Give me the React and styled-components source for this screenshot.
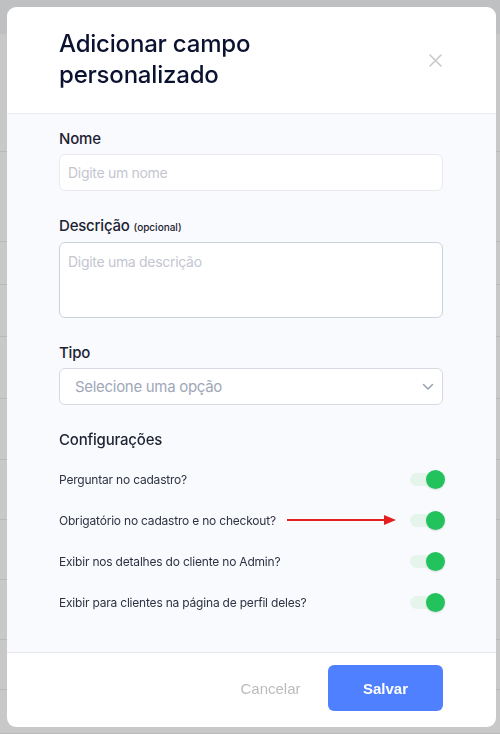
import styled, { createGlobalStyle } from 'styled-components'

const GlobalStyle = createGlobalStyle`
    * { box-sizing: border-box; }
    html, body { margin: 0; height: 100%; }
    body {
        font-family: Inter, "Noto Sans", sans-serif;
        background: #c8c8c9;
        overflow: hidden;
    }
`

const bgRows = [118, 90, 43, 52, 62, 61, 60, 60, 60, 50, 44]

const settings = [
    'Perguntar no cadastro?',
    'Obrigatório no cadastro e no checkout?',
    'Exibir nos detalhes do cliente no Admin?',
    'Exibir para clientes na página de perfil deles?',
]

export default function App() {
    return (
        <>
            <GlobalStyle />
            <Page>
                <PageTop />
                {bgRows.map((h, i) => <PageRow key={i} style={{ height: h }} />)}
            </Page>

            <Modal>
                <Header>
                    <Title>Adicionar campo<br />personalizado</Title>
                    <Close aria-label="Fechar">
                        <svg width="13" height="13" viewBox="0 0 13 13">
                            <path d="M1 1L12 12M12 1L1 12" stroke="#c9c9c9" strokeWidth="1.6" strokeLinecap="round" />
                        </svg>
                    </Close>
                </Header>

                <Body>
                    <Field>
                        <Label>Nome</Label>
                        <Input placeholder="Digite um nome" />
                    </Field>

                    <Field>
                        <Label>Descrição <Small>(opcional)</Small></Label>
                        <TextArea placeholder="Digite uma descrição" />
                    </Field>

                    <Field>
                        <Label>Tipo</Label>
                        <Select>
                            <span>Selecione uma opção</span>
                            <svg width="12" height="8" viewBox="0 0 12 8">
                                <path d="M1.5 1.5L6 6L10.5 1.5" fill="none" stroke="#9aa1b3" strokeWidth="1.5" strokeLinecap="round" strokeLinejoin="round" />
                            </svg>
                        </Select>
                    </Field>

                    <Field $last>
                        <Label>Configurações</Label>
                        <Settings>
                            {settings.map((s, i) => (
                                <SettingRow key={s}>
                                    <SettingText>{s}</SettingText>
                                    {i === 1 && (
                                        <Arrow width="110" height="12" viewBox="0 0 110 12">
                                            <path d="M0 6H98" stroke="#e3201f" strokeWidth="2" />
                                            <path d="M97 1L109 6L97 11Z" fill="#e3201f" />
                                        </Arrow>
                                    )}
                                    <Toggle>
                                        <Knob />
                                    </Toggle>
                                </SettingRow>
                            ))}
                        </Settings>
                    </Field>
                </Body>

                <Footer>
                    <CancelBtn>Cancelar</CancelBtn>
                    <SaveBtn>Salvar</SaveBtn>
                </Footer>
            </Modal>
        </>
    )
}

const Page = styled.div`
    display: flex;
    flex-direction: column;
    height: 734px;
`

const PageTop = styled.div`
    height: 34px;
    background: #bfc0c2;
`

const PageRow = styled.div`
    border-bottom: 1px solid #b9b9ba;
    flex-shrink: 0;
`

const Modal = styled.div`
    position: fixed;
    top: 7px;
    left: 7px;
    width: 489px;
    height: 720px;
    background: #fff;
    border-radius: 9px;
    display: flex;
    flex-direction: column;
    overflow: hidden;
`

const Header = styled.div`
    height: 107px;
    flex-shrink: 0;
    padding: 0 53px 0 52px;
    display: flex;
    align-items: center;
    justify-content: space-between;
    border-bottom: 1px solid #e9ebf0;
`

const Title = styled.h2`
    margin: 0;
    padding-bottom: 2px;
    font-size: 24px;
    line-height: 31px;
    font-weight: 500;
    color: #0b1230;
    letter-spacing: -0.2px;
`

const Close = styled.button`
    border: 0;
    background: none;
    padding: 0;
    margin-right: 1px;
    display: flex;
    cursor: pointer;
`

const Body = styled.div`
    flex: 1;
    background: #f9fafd;
    padding: 16px 53px 0 52px;
    display: flex;
    flex-direction: column;
`

const Field = styled.div`
    display: flex;
    flex-direction: column;
    margin-bottom: ${p => (p.$last ? 0 : 26)}px;
`

const Label = styled.label`
    font-size: 15px;
    line-height: 18px;
    font-weight: 500;
    color: #1d2233;
    margin-bottom: 6px;
    letter-spacing: -0.2px;
`

const Small = styled.span`
    font-size: 10px;
    font-weight: 500;
    letter-spacing: 0;
`

const Input = styled.input`
    height: 37px;
    border: 1px solid #e8eaef;
    border-radius: 6px;
    background: #fff;
    padding: 0 8px;
    font: 14px Inter, sans-serif;
    letter-spacing: -0.3px;
    outline: none;
    &::placeholder { color: #c3c6d0; }
`

const TextArea = styled.textarea`
    height: 76px;
    border: 1px solid #cdd1da;
    border-radius: 6px;
    background: #fff;
    padding: 10px 8px;
    font: 14px Inter, sans-serif;
    letter-spacing: -0.3px;
    resize: none;
    outline: none;
    &::placeholder { color: #c3c6d0; }
`

const Select = styled.div`
    height: 37px;
    border: 1px solid #d6d9e1;
    border-radius: 6px;
    background: #fff;
    padding: 0 8px 0 15px;
    display: flex;
    align-items: center;
    justify-content: space-between;
    font-size: 15px;
    letter-spacing: -0.3px;
    color: #a0a7b9;
`

const Settings = styled.div`
    display: flex;
    flex-direction: column;
    padding-top: 4px;
`

const SettingRow = styled.div`
    position: relative;
    height: 41px;
    display: flex;
    align-items: center;
    justify-content: space-between;
`

const SettingText = styled.span`
    font-size: 12px;
    color: #2d3243;
    letter-spacing: -0.2px;
`

const Arrow = styled.svg`
    position: absolute;
    left: 228px;
    top: 14px;
`

const Toggle = styled.div`
    width: 34px;
    height: 13px;
    border-radius: 7px;
    background: #e5f5eb;
    position: relative;
    margin-right: -1px;
`

const Knob = styled.div`
    position: absolute;
    right: -1px;
    top: -3px;
    width: 19px;
    height: 19px;
    border-radius: 50%;
    background: #22c35d;
    box-shadow: 0 1px 2px rgba(0, 0, 0, 0.12);
`

const Footer = styled.div`
    height: 75px;
    flex-shrink: 0;
    border-top: 1px solid #e6e8ee;
    display: flex;
    align-items: center;
    justify-content: flex-end;
    padding: 0 53px 4px 0;
`

const CancelBtn = styled.button`
    width: 115px;
    height: 46px;
    border: 0;
    background: none;
    font: 15px "Liberation Sans", Arial, sans-serif;
    color: #bcbcbc;
    cursor: pointer;
`

const SaveBtn = styled.button`
    width: 115px;
    height: 46px;
    border: 0;
    border-radius: 6px;
    background: #4f80ff;
    font: bold 15px "Liberation Sans", Arial, sans-serif;
    color: #fff;
    cursor: pointer;
`
